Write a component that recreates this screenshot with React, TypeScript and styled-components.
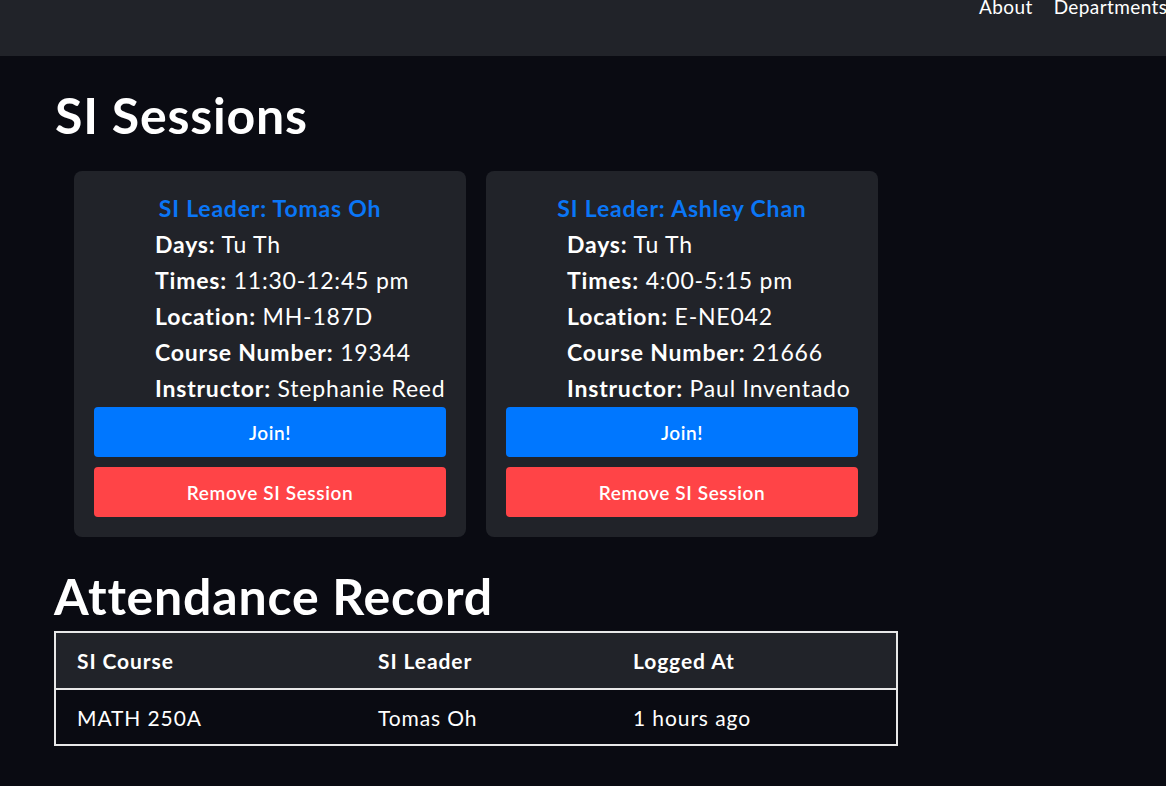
import React from "react";
import styled, {createGlobalStyle} from "styled-components";

const sessions = [
    {
        leader: "Tomas Oh",
        days: "Tu Th",
        times: "11:30-12:45 pm",
        location: "MH-187D",
        course: "19344",
        instructor: "Stephanie Reed",
    },
    {
        leader: "Ashley Chan",
        days: "Tu Th",
        times: "4:00-5:15 pm",
        location: "E-NE042",
        course: "21666",
        instructor: "Paul Inventado",
    },
];

const records = [
    {course: "MATH 250A", leader: "Tomas Oh", logged: "1 hours ago"},
];

const App = () => {
    return (
        <>
            <GlobalStyle/>
            <NavBar>
                <NavLink>About</NavLink>
                <NavLink>Departments</NavLink>
            </NavBar>
            <Main>
                <PageTitle>SI Sessions</PageTitle>
                <CardRow>
                    {sessions.map((s) => (
                        <Card key={s.leader}>
                            <LeaderTitle>SI Leader: {s.leader}</LeaderTitle>
                            <DetailList>
                                <Detail><b>Days:</b> {s.days}</Detail>
                                <Detail><b>Times:</b> {s.times}</Detail>
                                <Detail><b>Location:</b> {s.location}</Detail>
                                <Detail><b>Course Number:</b> {s.course}</Detail>
                                <Detail><b>Instructor:</b> {s.instructor}</Detail>
                            </DetailList>
                            <ActionButton $variant="join">Join!</ActionButton>
                            <ActionButton $variant="remove">Remove SI Session</ActionButton>
                        </Card>
                    ))}
                </CardRow>
                <SectionTitle>Attendance Record</SectionTitle>
                <Table>
                    <thead>
                    <tr>
                        <HeadCell $width={280}>SI Course</HeadCell>
                        <HeadCell $width={234}>SI Leader</HeadCell>
                        <HeadCell>Logged At</HeadCell>
                    </tr>
                    </thead>
                    <tbody>
                    {records.map((r) => (
                        <tr key={r.course}>
                            <BodyCell>{r.course}</BodyCell>
                            <BodyCell>{r.leader}</BodyCell>
                            <BodyCell>{r.logged}</BodyCell>
                        </tr>
                    ))}
                    </tbody>
                </Table>
            </Main>
        </>
    )
};

const GlobalStyle = createGlobalStyle`
  html, body {
    margin: 0;
    background: #0a0b12;
    color: #ffffff;
    font-family: 'Lato', sans-serif;
  }
`;

const NavBar = styled.nav`
  height: 56px;
  background: #212329;
  display: flex;
  justify-content: flex-start;
  align-items: flex-start;
  gap: 21px;
  padding-left: 979px;
  overflow: hidden;
  white-space: nowrap;
`;

const NavLink = styled.a`
  font-size: 19px;
  line-height: 14px;
  letter-spacing: 0.4px;
  color: #ffffff;
  font-family: 'Lato', sans-serif;
`;

const Main = styled.main`
  padding: 24px 0 0 54px;
`;

const PageTitle = styled.h1`
  font-size: 50px;
  font-weight: bold;
  letter-spacing: 0.8px;
  margin: 0 0 0 1px;
  line-height: 70px;
`;

const CardRow = styled.div`
  display: flex;
  gap: 20px;
  margin: 21px 0 0 20px;
`;

const Card = styled.div`
  width: 352px;
  padding: 20px;
  background: #212329;
  border-radius: 8px;
  display: flex;
  flex-direction: column;
`;

const LeaderTitle = styled.h3`
  margin: -1px 0 1px;
  text-align: center;
  color: #0a76f6;
  font-size: 23px;
  font-weight: bold;
  letter-spacing: 0.8px;
  line-height: 36px;
`;

const DetailList = styled.div`
  padding-left: 61px;
  white-space: nowrap;
  margin-top: -1px;
  margin-bottom: 1px;
`;

const Detail = styled.div`
  font-size: 23px;
  letter-spacing: 0.8px;
  line-height: 36px;
`;

const ActionButton = styled.button<{ $variant: "join" | "remove" }>`
  height: 50px;
  border: none;
  border-radius: 4px;
  margin-top: ${p => p.$variant === "join" ? "0" : "10px"};
  background: ${p => p.$variant === "join" ? "#0077ff" : "#ff4447"};
  color: #ffffff;
  font-family: 'Lato', sans-serif;
  font-size: 19px;
  letter-spacing: 0.6px;
  font-weight: 600;
`;

const SectionTitle = styled.h2`
  font-size: 50px;
  font-weight: bold;
  letter-spacing: 0.8px;
  margin: 24px 0 0 0;
  line-height: 70px;
`;

const Table = styled.table`
  width: 844px;
  border-collapse: collapse;
  border: 2px solid #e8e8e8;
  margin-top: 0;
  font-size: 21px;
  letter-spacing: 0.9px;
`;

const HeadCell = styled.th<{ $width?: number }>`
  text-align: left;
  font-weight: bold;
  background: #212329;
  height: 55px;
  padding: 0 0 0 21px;
  width: ${p => p.$width ? p.$width + "px" : "auto"};
  border-bottom: 2px solid #e8e8e8;
`;

const BodyCell = styled.td`
  height: 54px;
  padding: 0 0 0 21px;
`;

export default App;
